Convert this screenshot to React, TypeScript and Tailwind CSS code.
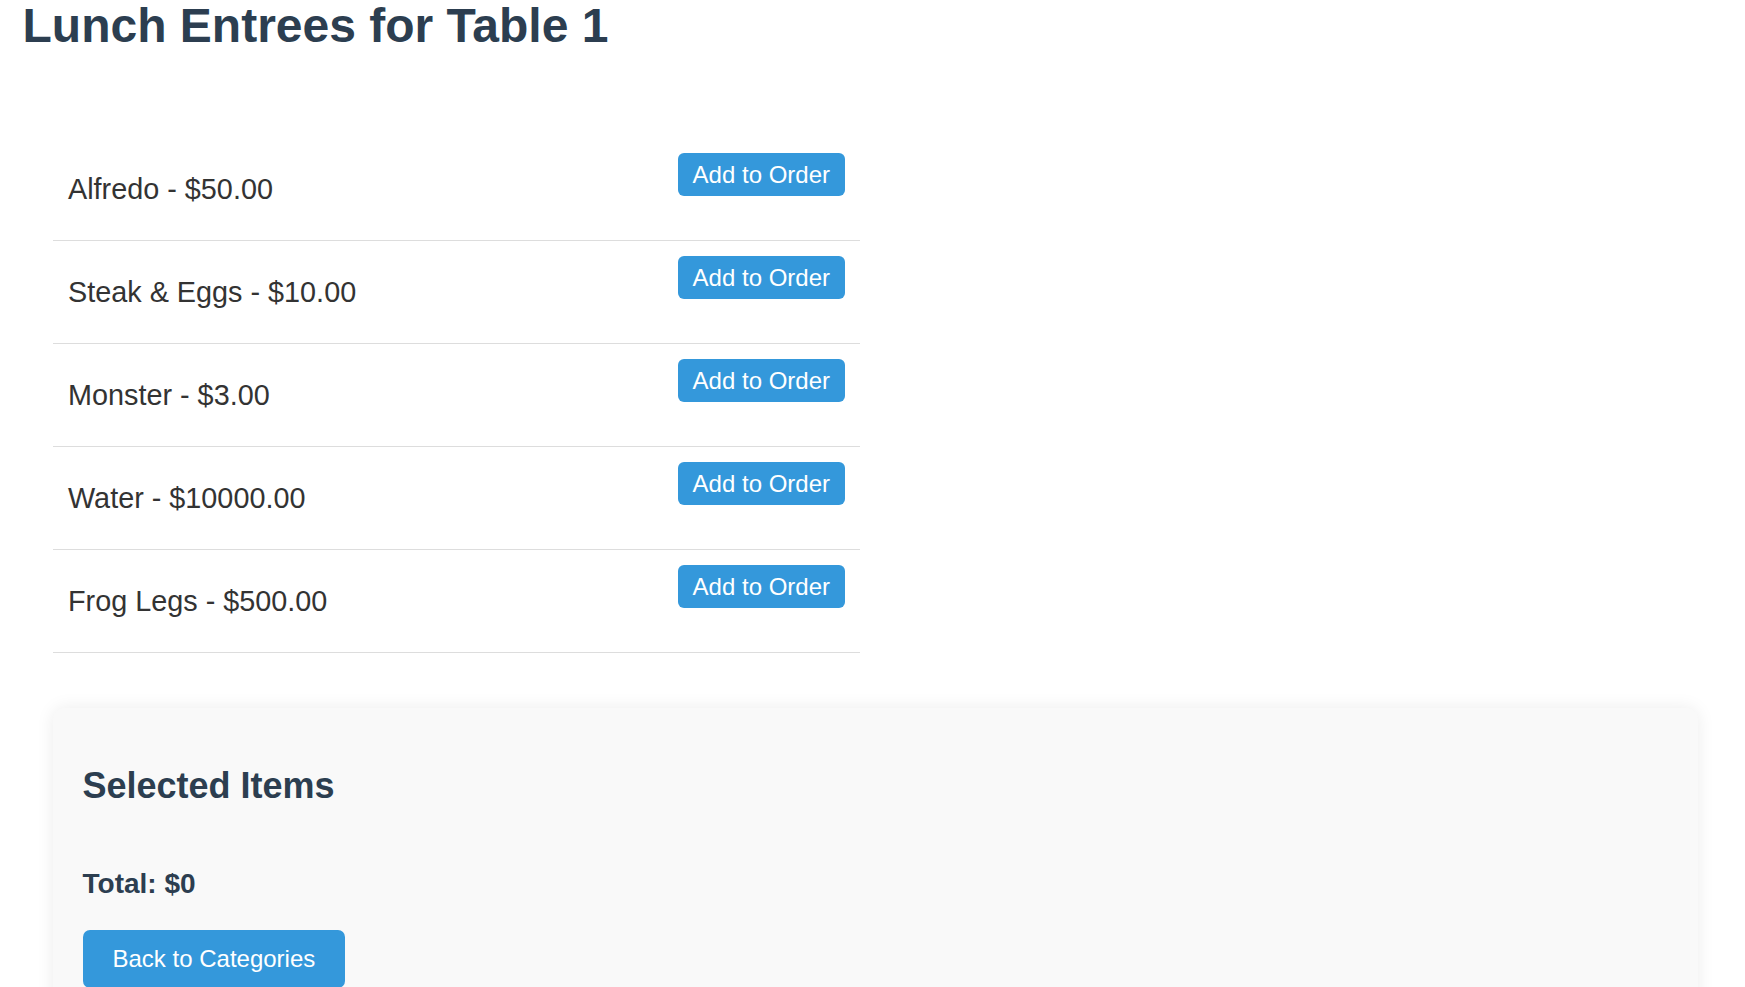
const items = [
  { name: "Alfredo", price: 50 },
  { name: "Steak & Eggs", price: 10 },
  { name: "Monster", price: 3 },
  { name: "Water", price: 10000 },
  { name: "Frog Legs", price: 500 },
];

export default function App() {
  return (
    <div className="min-h-screen bg-white px-[22.5px] font-['Liberation_Sans',Arial,sans-serif]">
      <h1 className="mt-[-2px] text-[48px] font-bold leading-[1.15] text-[#2c3e50]">
        Lunch Entrees for Table 1
      </h1>

      <ul className="ml-[30.5px] mt-[85px] w-[807px]">
        {items.map((item) => (
          <li
            key={item.name}
            className="flex h-[103px] items-start justify-between border-b border-[#dddddd] px-[15px] pt-[15px]"
          >
            <span className="mt-[20px] text-[28.8px] leading-[1.15] text-[#333333]">
              {item.name} - ${item.price.toFixed(2)}
            </span>
            <button className="rounded-[6px] bg-[#3498db] px-[15px] py-[7.5px] text-[24px] leading-[1.15] text-white">
              Add to Order
            </button>
          </li>
        ))}
      </ul>

      {/* order summary */}
      <div className="ml-[30px] mr-[24.5px] mt-[55px] rounded-[12px] bg-[#f9f9f9] px-[30px] pb-[30px] pt-[30px] shadow-[0_0_18px_rgba(0,0,0,0.08)]">
        <h2 className="mt-[26.5px] text-[36px] font-bold leading-[1.15] text-[#2c3e50]">Selected Items</h2>
        <p className="mt-[62px] text-[28px] font-bold leading-[1.15] text-[#2c3e50]">Total: $0</p>
        <button className="mt-[30px] rounded-[7px] bg-[#3498db] px-[30px] py-[15px] text-[24px] leading-[1.15] text-white">
          Back to Categories
        </button>
      </div>
    </div>
  );
}
